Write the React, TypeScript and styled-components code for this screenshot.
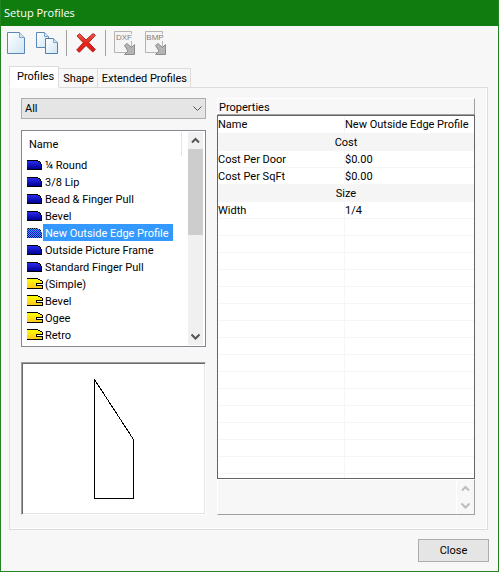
import React, { useState } from "react";
import styled, { createGlobalStyle } from "styled-components";

const GlobalStyle = createGlobalStyle`
  *, *::before, *::after { box-sizing: border-box; }
  body { margin: 0; background: #f7f7f7; }
  body, button, select, table {
    font-family: Roboto, "Liberation Sans", sans-serif;
    font-size: 11px;
    color: #000;
  }
  button { padding: 0; border: 0; background: none; text-align: left; }
`;

const Dialog = styled.div`
  display: flex;
  flex-direction: column;
  min-height: 100vh;
  background: #f7f7f7;
  border: 1px solid #218321;
  border-top: 0;
`;

const TitleBar = styled.h1`
  margin: 0;
  height: 26px;
  padding: 0 3px;
  background: #107c10;
  color: #fff;
  font: 11px/26px "Open Sans", sans-serif;
`;

const Toolbar = styled.div`
  display: flex;
  align-items: center;
  gap: 7px;
  height: 34px;
  padding: 0 3px;
`;

const ToolButton = styled.button`
  display: grid;
  place-items: center;
  width: 24px;
  height: 26px;
`;

const ToolSeparator = styled.span`
  width: 1px;
  height: 26px;
  background: #a0a0a0;
`;

const TabStrip = styled.div`
  display: flex;
  align-items: flex-end;
  height: 22px;
  margin: 6px 10px -1px 8px;
`;

const Tab = styled.button<{ $active?: boolean }>`
  position: relative;
  height: ${(p) => (p.$active ? 22 : 20)}px;
  padding: ${(p) => (p.$active ? "0 4px 2px 7px" : "0 3px 0 4px")};
  background: ${(p) => (p.$active ? "#fff" : "#f7f7f7")};
  border: 1px solid #dcdcdc;
  border-bottom-color: ${(p) => (p.$active ? "#fff" : "#dcdcdc")};
  & + & { border-left: 0; }
`;

const TabPage = styled.main`
  flex: 1;
  display: grid;
  grid-template-columns: 185fr 258fr;
  gap: 11px;
  margin: 0 10px 0 8px;
  padding: 10px 12px 14px 11px;
  border: 1px solid #dcdcdc;
  box-shadow: inset -1px -1px #fff;
`;

const Column = styled.div`
  display: flex;
  flex-direction: column;
  min-width: 0;
`;

const FilterWrap = styled.div`
  display: grid;
  align-items: center;
  margin-bottom: 11px;
  & > * { grid-area: 1 / 1; }
  & > svg { justify-self: end; margin-right: 4px; pointer-events: none; }
`;

const Filter = styled.select`
  appearance: none;
  width: 100%;
  height: 21px;
  padding: 0 3px;
  border: 1px solid #adadad;
  border-radius: 0;
  background: #e5e5e5;
`;

const ListBox = styled.div`
  display: flex;
  height: 217px;
  padding: 1px 2px 1px 1px;
  border: 1px solid #828790;
  background: #fff;
`;

const ListContent = styled.div`
  flex: 1;
  min-width: 0;
`;

const ListHeader = styled.div`
  height: 24px;
  margin-right: 6px;
  padding-left: 6px;
  border-right: 1px solid #e5e5e5;
  line-height: 26px;
`;

const Items = styled.div`
  padding-left: 4px;
`;

const Item = styled.button`
  display: flex;
  align-items: center;
  width: 100%;
  height: 17px;
  white-space: nowrap;
  svg { flex: none; }
`;

const ItemText = styled.span<{ $selected: boolean }>`
  padding: 2px 4px 0 2px;
  line-height: 15px;
  background: ${(p) => (p.$selected ? "#3399ff" : "transparent")};
  color: ${(p) => (p.$selected ? "#fff" : "#000")};
`;

const ScrollBar = styled.div`
  display: flex;
  flex-direction: column;
  width: 15px;
  background: #f0f0f0;
`;

const ScrollButton = styled.button`
  display: grid;
  place-items: center;
  width: 100%;
  height: 17px;
`;

const ScrollThumb = styled.div`
  height: 86px;
  margin-bottom: auto;
  background: #cdcdcd;
`;

const Preview = styled.div`
  flex: 1;
  display: grid;
  place-items: center;
  min-height: 152px;
  margin-top: 15px;
  border: 1px solid;
  border-color: #a0a0a0 #fff #fff #a0a0a0;
  background: #fff;
  box-shadow: inset 1px 1px #696969, inset -1px -1px #e3e3e3;
`;

const SectionTitle = styled.h2`
  margin: 0;
  height: 17px;
  padding-left: 1px;
  border: 1px solid;
  border-color: #fff #a0a0a0 #a0a0a0 #fff;
  font: inherit;
  line-height: 17px;
`;

const GridFrame = styled.div`
  flex: 1;
  display: flex;
  border: 1px solid #646464;
  background: linear-gradient(#f5f5f5, #f5f5f5) 126px 0 / 1px 100% no-repeat #fff;
`;

const PropertyTable = styled.table`
  width: 100%;
  height: max-content;
  border-collapse: collapse;
  table-layout: fixed;
  td, th {
    height: 17px;
    padding: 2px 0 0;
    border-bottom: 1px solid #f5f5f5;
    font-weight: 400;
    text-align: left;
    line-height: 14px;
    white-space: nowrap;
  }
`;

const NameColumn = styled.col`
  width: 127px;
`;

const GroupCell = styled.th`
  &&& { background: #f5f5f5; text-align: center; }
`;

const Description = styled.div`
  display: flex;
  justify-content: flex-end;
  height: 36px;
  border: 1px solid;
  border-color: #fff #a0a0a0 #a0a0a0 #fff;
`;

const DescriptionScroll = styled.div`
  width: 18px;
  border-left: 1px solid #fff;
`;

const Footer = styled.footer`
  display: flex;
  justify-content: flex-end;
  padding: 9px;
`;

const CloseButton = styled.button`
  width: 71px;
  height: 23px;
  border: 1px solid #adadad;
  background: #e5e5e5;
  text-align: center;
`;

const Chevron = ({ up, thin, color = "#555" }: { up?: boolean; thin?: boolean; color?: string }) => (
  <svg width="9" height="7" viewBox="0 0 9 7" fill="none" stroke={color} strokeWidth={thin ? 1 : 2} aria-hidden="true">
    <path d={up ? "M1 5.5 4.5 2 8 5.5" : "M.5 1.5 4.5 5.5 8.5 1.5"} />
  </svg>
);

const NewIcon = () => (
  <svg width="18" height="22" viewBox="0 0 18 22" aria-hidden="true">
    <defs>
      <linearGradient id="paper" x1="0" y1="0" x2="1" y2="1">
        <stop offset="0" stopColor="#fff" />
        <stop offset="1" stopColor="#cfe5f5" />
      </linearGradient>
    </defs>
    <path d="M.5.5h12l5 5v16H.5z" fill="url(#paper)" stroke="#5b87b5" />
    <path d="M12.5.5v5h5" fill="#d5e7f5" stroke="#7ba4cc" />
  </svg>
);

const CopyIcon = () => (
  <svg width="22" height="22" viewBox="0 0 22 22" aria-hidden="true">
    <path d="M.5.5h8l4 4v11H.5z" fill="url(#paper)" stroke="#5b87b5" />
    <path d="M8.5.5v4h4" fill="#d5e7f5" stroke="#7ba4cc" />
    <path d="M9.5 6.5h8l4 4v11h-12z" fill="url(#paper)" stroke="#4d7fb0" />
    <path d="M17.5 6.5v4h4" fill="#d5e7f5" stroke="#7ba4cc" />
  </svg>
);

const DeleteIcon = () => (
  <svg width="20" height="20" viewBox="0 0 20 20" aria-hidden="true">
    <defs>
      <linearGradient id="cross" x1="0" y1="0" x2="0" y2="1">
        <stop offset="0" stopColor="#f0604f" />
        <stop offset=".5" stopColor="#e3241b" />
        <stop offset="1" stopColor="#d81e18" />
      </linearGradient>
    </defs>
    <path d="M1 3 3.5.7 10 7 17 .6 19.4 2.3 12.7 9.5 19.3 16.5 16.8 19 10 12.5 3.3 19.3.7 17 7.3 9.7z" fill="url(#cross)" stroke="#b3201a" strokeLinejoin="round" />
  </svg>
);

const ExportIcon = ({ label }: { label: string }) => (
  <svg width="22" height="24" viewBox="0 0 22 24" overflow="visible" aria-hidden="true">
    <path d="M.5.5h17v21H.5z" fill="#f5f5f5" stroke="#b4b4b4" />
    <path d="M17 3h1v7h-1z" fill="#f5f5f5" />
    <text x="10" y="9" textAnchor="middle" fontFamily="Liberation Sans, sans-serif" fontSize="8" fill="#808080">{label}</text>
    <path d="M10.5 14.5 13 12.5 17.5 16.5 20.5 13.5V23.5H10.5L14 20z" fill="#b4b4b4" stroke="#8c8c8c" />
  </svg>
);

const EdgeIcon = ({ selected }: { selected: boolean }) => (
  <svg width="16" height="10" viewBox="0 0 16 10" shapeRendering="crispEdges" aria-hidden="true">
    <defs>
      <linearGradient id="edge" x1="0" y1="0" x2="0" y2="1">
        <stop offset="0" stopColor="#2a2af0" />
        <stop offset="1" stopColor="#000090" />
      </linearGradient>
      <pattern id="dither" width="2" height="2" patternUnits="userSpaceOnUse">
        <path d="M0 0h1v1H0zM1 1h1v1H1z" fill="#3399ff" />
      </pattern>
    </defs>
    <path d="M0 0h11v1h2v1h1v2h1v6H0z" fill="#000" />
    <path d="M0 1h11v1h2v2h1v5H0z" fill="url(#edge)" />
    {selected && <path d="M0 0h11v1h2v1h1v2h1v6H0z" fill="url(#dither)" />}
  </svg>
);

const GrooveIcon = () => (
  <svg width="16" height="11" viewBox="0 0 16 11" shapeRendering="crispEdges" aria-hidden="true">
    <defs>
      <linearGradient id="groove" x1="0" y1="0" x2="0" y2="1">
        <stop offset="0" stopColor="#ffff00" />
        <stop offset="1" stopColor="#ffc81e" />
      </linearGradient>
    </defs>
    <path d="M0 0h11v1h2v1h2v1h1v3h-6v1h6v4H0z" fill="#000" />
    <path d="M0 1h11v1h2v1h2v2H9v3h6v2H0z" fill="url(#groove)" />
  </svg>
);

const ProfileShape = () => (
  <svg width="40" height="120" viewBox="0 0 40 120" shapeRendering="crispEdges" role="img" aria-label="Profile outline">
    <path d="M.5.5v119h39v-59z" fill="none" stroke="#000" />
  </svg>
);

type Profile = { name: string; kind: "edge" | "groove" };

const profiles: Profile[] = [
  { name: "¼ Round", kind: "edge" },
  { name: "3/8 Lip", kind: "edge" },
  { name: "Bead & Finger Pull", kind: "edge" },
  { name: "Bevel", kind: "edge" },
  { name: "New Outside Edge Profile", kind: "edge" },
  { name: "Outside Picture Frame", kind: "edge" },
  { name: "Standard Finger Pull", kind: "edge" },
  { name: "(Simple)", kind: "groove" },
  { name: "Bevel", kind: "groove" },
  { name: "Ogee", kind: "groove" },
  { name: "Retro", kind: "groove" },
];

const groups = [
  { title: "Cost", rows: [["Cost Per Door", "$0.00"], ["Cost Per SqFt", "$0.00"]] },
  { title: "Size", rows: [["Width", "1/4"]] },
];

export default function App() {
  const [selected, setSelected] = useState(4);
  return (
    <>
      <GlobalStyle />
      <Dialog role="dialog" aria-labelledby="dialog-title">
        <TitleBar id="dialog-title">Setup Profiles</TitleBar>
        <Toolbar role="toolbar">
          <ToolButton aria-label="New"><NewIcon /></ToolButton>
          <ToolButton aria-label="Copy"><CopyIcon /></ToolButton>
          <ToolSeparator />
          <ToolButton aria-label="Delete"><DeleteIcon /></ToolButton>
          <ToolSeparator />
          <ToolButton aria-label="Export DXF" disabled><ExportIcon label="DXF" /></ToolButton>
          <ToolButton aria-label="Export BMP" disabled><ExportIcon label="BMP" /></ToolButton>
        </Toolbar>
        <TabStrip role="tablist">
          <Tab role="tab" aria-selected="true" $active>Profiles</Tab>
          <Tab role="tab" aria-selected="false">Shape</Tab>
          <Tab role="tab" aria-selected="false">Extended Profiles</Tab>
        </TabStrip>
        <TabPage>
          <Column>
            <FilterWrap>
              <Filter aria-label="Profile type"><option>All</option></Filter>
              <Chevron thin />
            </FilterWrap>
            <ListBox>
              <ListContent>
                <ListHeader>Name</ListHeader>
                <Items role="listbox" aria-label="Profiles">
                  {profiles.map((p, i) => (
                    <Item key={i} role="option" aria-selected={i === selected} onClick={() => setSelected(i)}>
                      {p.kind === "edge" ? <EdgeIcon selected={i === selected} /> : <GrooveIcon />}
                      <ItemText $selected={i === selected}>{p.name}</ItemText>
                    </Item>
                  ))}
                </Items>
              </ListContent>
              <ScrollBar>
                <ScrollButton aria-label="Scroll up"><Chevron up /></ScrollButton>
                <ScrollThumb />
                <ScrollButton aria-label="Scroll down"><Chevron /></ScrollButton>
              </ScrollBar>
            </ListBox>
            <Preview><ProfileShape /></Preview>
          </Column>
          <Column>
            <SectionTitle>Properties</SectionTitle>
            <GridFrame>
              <PropertyTable>
                <colgroup><NameColumn /><col /></colgroup>
                <tbody>
                  <tr><td>Name</td><td>New Outside Edge Profile</td></tr>
                  {groups.map((g) => (
                    <React.Fragment key={g.title}>
                      <tr><GroupCell colSpan={2}>{g.title}</GroupCell></tr>
                      {g.rows.map(([k, v]) => <tr key={k}><td>{k}</td><td>{v}</td></tr>)}
                    </React.Fragment>
                  ))}
                  {Array.from({ length: 15 }, (_, i) => <tr key={i}><td /><td /></tr>)}
                </tbody>
              </PropertyTable>
            </GridFrame>
            <Description>
              <DescriptionScroll>
                <ScrollButton aria-label="Scroll description up" disabled><Chevron up color="#bdbdbd" /></ScrollButton>
                <ScrollButton aria-label="Scroll description down" disabled><Chevron color="#bdbdbd" /></ScrollButton>
              </DescriptionScroll>
            </Description>
          </Column>
        </TabPage>
        <Footer><CloseButton>Close</CloseButton></Footer>
      </Dialog>
    </>
  );
}
